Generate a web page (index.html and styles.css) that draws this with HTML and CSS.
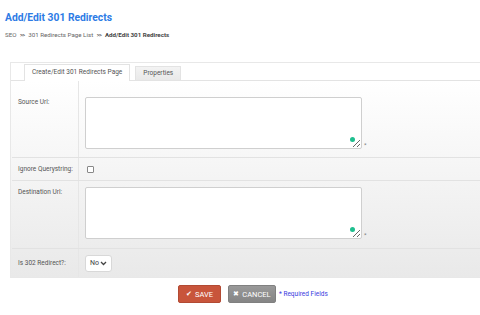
FILE: index.html
```html
<!DOCTYPE html>
<html>
<head>
<meta charset="utf-8">
<link rel="stylesheet" href="styles.css">
</head>
<body>
<h1 class="title">Add/Edit 301 Redirects</h1>
<div class="crumbs">SEO <b class="sep">&gt;&gt;</b> 301 Redirects Page List <b class="sep">&gt;&gt;</b> <b class="cur">Add/Edit 301 Redirects</b></div>

<div class="panel">
  <div class="tabs">
    <div class="tab active">Create/Edit 301 Redirects Page</div>
    <div class="tab">Properties</div>
  </div>
  <div class="form">
    <div class="row row-source">
      <div class="label">Source Url:</div>
      <div class="value">
        <div class="ta-wrap"><textarea class="ta"></textarea><span class="dot"></span></div><span class="req">*</span>
      </div>
    </div>
    <div class="row row-ignore">
      <div class="label">Ignore Querystring:</div>
      <div class="value"><span class="cb"></span></div>
    </div>
    <div class="row row-dest">
      <div class="label">Destination Url:</div>
      <div class="value">
        <div class="ta-wrap"><textarea class="ta"></textarea><span class="dot"></span></div><span class="req">*</span>
      </div>
    </div>
    <div class="row row-302">
      <div class="label">Is 302 Redirect?:</div>
      <div class="value">
        <div class="select">No <svg class="chev" width="7" height="5" viewBox="0 0 7 5"><path d="M1 1 L3.5 3.5 L6 1" fill="none" stroke="#444" stroke-width="1.3"/></svg></div>
      </div>
    </div>
  </div>
</div>

<div class="actions">
  <button class="btn save"><span class="ic">&#10004;</span> SAVE</button>
  <button class="btn cancel"><span class="ic">&#10006;</span> CANCEL</button>
  <span class="required">* Required Fields</span>
</div>
</body>
</html>
```

FILE: styles.css
```css
html { overflow: hidden; }
body {
  margin: 0;
  padding: 0 0 0 5px;
  font-family: Roboto, "Liberation Sans", sans-serif;
  background: #fff;
  color: #555;
}
.title {
  margin: 0;
  padding-top: 11px;
  font-size: 10.3px;
  line-height: 13px;
  font-weight: 700;
  color: #2d7be5;
}
.crumbs {
  margin-top: 7px;
  font-size: 6.2px;
  line-height: 8px;
  color: #666;
}
.crumbs .sep { font-size: 5.5px; color: #555; margin: 0 2px; letter-spacing: -0.5px; }
.crumbs .cur { color: #444; }

.panel {
  margin-left: 5px;
  margin-top: 23px;
  border: 1px solid #e8e8e8;
  border-right: none;
  background: #fff;
}
.tabs {
  display: flex;
  align-items: flex-end;
  gap: 5px;
  padding: 1px 0 0 13px;
  height: 16px;
  border-bottom: 1px solid #e3e3e3;
}
.tab {
  font-size: 6.5px;
  color: #555;
  border: 1px solid #e3e3e3;
  border-bottom: none;
  padding: 0 7px;
  height: 13px;
  line-height: 13px;
  background: linear-gradient(#f3f3f3, #e9e9e9);
}
.tab.active {
  height: 16px;
  line-height: 15px;
  background: #fff;
  margin-bottom: -1px;
  padding: 0 7px;
}
.form {
  background: linear-gradient(#ffffff, #e9e9e9);
  padding-left: 1px;
}
.row {
  display: flex;
  border-bottom: 1px solid #e2e2e2;
}
.row:last-child { border-bottom: none; }
.label {
  width: 60px;
  flex: none;
  padding-left: 6px;
  border-right: 1px solid #e6e6e6;
  font-size: 6.5px;
  line-height: 9px;
  color: #555;
}
.value {
  padding-left: 6px;
  display: flex;
  align-items: flex-end;
}
.row-source { height: 76px; }
.row-source .label { padding-top: 17px; }
.row-source .value { padding-top: 15px; align-items: flex-end; height: 53px; }
.row-ignore { height: 22px; align-items: stretch; }
.row-ignore .label { display: flex; align-items: center; }
.row-ignore .value { align-items: center; padding-left: 8px; }
.row-dest { height: 67px; }
.row-dest .label { padding-top: 7px; }
.row-dest .value { padding-top: 5px; height: 53px; }
.row-302 { height: 28px; }
.row-302 .label { display: flex; align-items: center; }
.row-302 .value { align-items: center; }

.ta-wrap { position: relative; width: 277px; height: 52px; }
.ta {
  display: block;
  box-sizing: border-box;
  width: 277px;
  height: 52px;
  margin: 0;
  border: 1px solid #cfcfcf;
  border-radius: 2px;
  background: #fff;
  resize: both;
}
.dot {
  position: absolute;
  right: 7px;
  bottom: 7px;
  width: 5px;
  height: 5px;
  border-radius: 50%;
  background: #1fbf8f;
}
.req {
  font-size: 6px;
  color: #777;
  margin-left: 2px;
  line-height: 6px;
  margin-bottom: 1px;
}
.cb {
  display: block;
  width: 5px;
  height: 5px;
  border: 1px solid #888;
  border-radius: 1px;
  background: #fff;
}
.select {
  box-sizing: border-box;
  width: 27px;
  height: 17px;
  border: 1px solid #d8d8d8;
  border-radius: 3px;
  background: #fff;
  font-size: 7px;
  color: #444;
  display: flex;
  align-items: center;
  justify-content: space-between;
  padding: 0 4px 0 4px;
}
.chev { display: block; }

.actions {
  padding-left: 173px;
  margin-top: 7px;
  display: flex;
  align-items: center;
}
.btn {
  height: 18px;
  border-radius: 2px;
  font-family: Roboto, "Liberation Sans", sans-serif;
  font-size: 7.5px;
  color: #fff;
  padding: 0;
  display: flex;
  align-items: center;
  justify-content: center;
  gap: 3px;
}
.btn .ic { font-size: 6.5px; }
.save {
  width: 43px;
  background: #c8553b;
  border: 1px solid #b24a33;
}
.cancel {
  width: 48px;
  margin-left: 7px;
  background: linear-gradient(#999, #858585);
  border: 1px solid #808080;
}
.required {
  margin-left: 3px;
  font-size: 6.5px;
  color: #3b3be0;
}
```
